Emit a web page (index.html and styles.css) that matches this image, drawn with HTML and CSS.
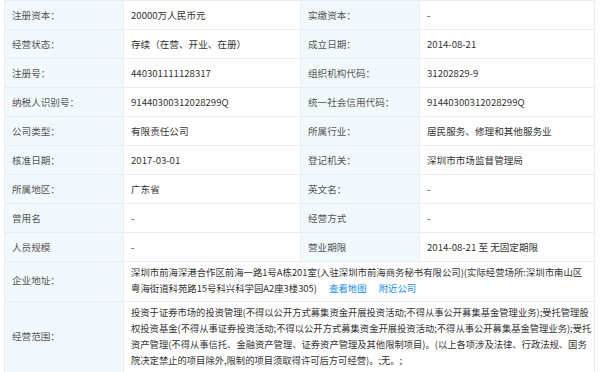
FILE: index.html
```html
<!DOCTYPE html>
<html>
<head>
    <meta charset="utf-8">
    <title>企业基本信息</title>
    <link rel="stylesheet" href="styles.css">
</head>
<body>
    <table class="info-table">
        <colgroup>
            <col class="col-label">
            <col class="col-value">
            <col class="col-label">
            <col class="col-value2">
        </colgroup>
        <tr>
            <td class="label">注册资本：</td>
            <td>20000万人民币元</td>
            <td class="label">实缴资本：</td>
            <td>-</td>
        </tr>
        <tr>
            <td class="label">经营状态：</td>
            <td>存续（在营、开业、在册）</td>
            <td class="label">成立日期：</td>
            <td>2014-08-21</td>
        </tr>
        <tr>
            <td class="label">注册号：</td>
            <td>440301111128317</td>
            <td class="label">组织机构代码：</td>
            <td>31202829-9</td>
        </tr>
        <tr>
            <td class="label">纳税人识别号：</td>
            <td>91440300312028299Q</td>
            <td class="label">统一社会信用代码：</td>
            <td>91440300312028299Q</td>
        </tr>
        <tr>
            <td class="label">公司类型：</td>
            <td>有限责任公司</td>
            <td class="label">所属行业：</td>
            <td>居民服务、修理和其他服务业</td>
        </tr>
        <tr>
            <td class="label">核准日期：</td>
            <td>2017-03-01</td>
            <td class="label">登记机关：</td>
            <td>深圳市市场监督管理局</td>
        </tr>
        <tr>
            <td class="label">所属地区：</td>
            <td>广东省</td>
            <td class="label">英文名：</td>
            <td>-</td>
        </tr>
        <tr>
            <td class="label">曾用名</td>
            <td>-</td>
            <td class="label">经营方式</td>
            <td>-</td>
        </tr>
        <tr>
            <td class="label">人员规模</td>
            <td>-</td>
            <td class="label">营业期限</td>
            <td>2014-08-21 至 无固定期限</td>
        </tr>
        <tr class="multi">
            <td class="label">企业地址：</td>
            <td colspan="3" class="address">深圳市前海深港合作区前海一路1号A栋201室(入驻深圳市前海商务秘书有限公司)(实际经营场所:深圳市南山区粤海街道科苑路15号科兴科学园A2座3楼305) <a href="#" class="link">查看地图</a> <a href="#" class="link">附近公司</a></td>
        </tr>
        <tr class="multi">
            <td class="label">经营范围：</td>
            <td colspan="3" class="scope">投资于证券市场的投资管理(不得以公开方式募集资金开展投资活动;不得从事公开募集基金管理业务);受托管理股权投资基金(不得从事证券投资活动;不得以公开方式募集资金开展投资活动;不得从事公开募集基金管理业务);受托资产管理(不得从事信托、金融资产管理、证券资产管理及其他限制项目)。(以上各项涉及法律、行政法规、国务院决定禁止的项目除外,限制的项目须取得许可后方可经营)。;无。;</td>
        </tr>
    </table>
</body>
</html>
```

FILE: styles.css
```css
body {
    margin: 0;
    background-color: #fff;
    font-family: "Microsoft YaHei", "Noto Sans CJK SC", sans-serif;
    font-size: 9.6px;
    color: #333;
}
.info-table {
    margin-left: 4px;
    width: 590px;
    border-collapse: collapse;
    table-layout: fixed;
}
.col-label {
    width: 119px;
}
.col-value {
    width: 177px;
}
.col-value2 {
    width: 175px;
}
.info-table td {
    border: 1px solid #e4eef6;
    padding: 6px 7px;
    line-height: 16px;
    vertical-align: middle;
    word-break: break-all;
}
.info-table td.label {
    background-color: #f2f9fc;
    color: #555;
}
.info-table tr.multi td {
    padding-top: 2px;
    padding-bottom: 5px;
}
.info-table td.address {
    font-size: 9.4px;
    padding-right: 4px;
}
.info-table td.scope {
    font-size: 9.3px;
    padding-right: 2px;
}
.link {
    color: #128bed;
    text-decoration: none;
    margin-left: 10px;
}
```
